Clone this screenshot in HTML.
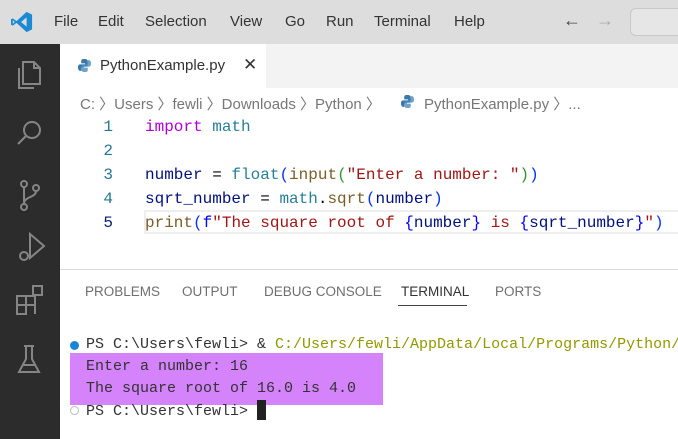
<!DOCTYPE html>
<html><head><style>
*{margin:0;padding:0;box-sizing:border-box}
body{width:678px;height:439px;overflow:hidden;background:#fff;position:relative;font-family:"Liberation Sans",sans-serif}
.a{position:absolute;white-space:pre}
.c{position:absolute;left:145px;font-family:"Liberation Mono",monospace;font-size:16px;line-height:24px;white-space:pre}
.n{position:absolute;left:60px;width:53px;text-align:right;font-family:"Liberation Mono",monospace;font-size:16px;line-height:24px;color:#237893}
.t{position:absolute;left:86px;font-family:"Liberation Mono",monospace;font-size:15px;line-height:22px;white-space:pre;color:#333}
</style></head><body>
<div class="a" style="left:0;top:0;width:678px;height:44px;background:#dddddd"></div>
<svg class="a" style="left:11px;top:11px" width="22" height="22" viewBox="0 0 24 24"><path d="M17 1 L23 4 V20 L17 23 L6 13 L2 16 L0 15 V9 L2 8 L6 11 Z M17 7 L11 12 L17 17 Z M2 10 V14 L4 12 Z" fill="#1a8ad4"/></svg>
<div class="a" style="left:54px;top:13px;font-size:15px;color:#333">File</div>
<div class="a" style="left:98px;top:13px;font-size:15px;color:#333">Edit</div>
<div class="a" style="left:145px;top:13px;font-size:15px;color:#333">Selection</div>
<div class="a" style="left:230px;top:13px;font-size:15px;color:#333">View</div>
<div class="a" style="left:285px;top:13px;font-size:15px;color:#333">Go</div>
<div class="a" style="left:326px;top:13px;font-size:15px;color:#333">Run</div>
<div class="a" style="left:374px;top:13px;font-size:15px;color:#333">Terminal</div>
<div class="a" style="left:454px;top:13px;font-size:15px;color:#333">Help</div>
<div class="a" style="left:563px;top:10px;font-size:18px;color:#444">←</div>
<div class="a" style="left:596px;top:10px;font-size:18px;color:#aaa">→</div>
<div class="a" style="left:630px;top:8px;width:60px;height:28px;border:1px solid #c8c8c8;border-radius:6px;background:#e6e6e6"></div>
<div class="a" style="left:0;top:44px;width:60px;height:395px;background:#2c2c2c"></div>
<svg class="a" style="left:14px;top:56px" width="32" height="340" viewBox="0 0 32 340" fill="none" stroke="#858585" stroke-width="2">
<path d="M9 6 H20 L26 12 V28 H9 Z M20 6 V12 H26 M5 12 V32 H20"/>
<circle cx="18" cy="74" r="8"/><path d="M12 80 L4 88"/>
<circle cx="10" cy="128" r="3"/><circle cx="22" cy="132" r="3"/><circle cx="10" cy="151" r="3"/><path d="M10 131 V148 M22 135 C22 142 10 140 10 148"/>
<path d="M16 178 L30 190 L16 202 Z"/><circle cx="10" cy="200" r="4"/>
<path d="M3 240 H12 V258 H3 Z M3 249 H21 V258 M12 240 H21 V249"/><rect x="19" y="230" width="9" height="9"/>
<path d="M12 290 V303 L5 316 H25 L18 303 V290 M10 290 H20 M8 309 H22"/>
</svg>
<div class="a" style="left:60px;top:44px;width:618px;height:44px;background:#f3f3f3"></div>
<div class="a" style="left:60px;top:44px;width:206px;height:44px;background:#fff"></div>
<svg class="a" style="left:78px;top:59px" width="13" height="13" viewBox="0 0 12 12"><path d="M6 0C3 0 3 1 3 2V4H6.5V5H2C0 5 0 7 0 8 0 10 1 11 2 11H3V9C3 8 4 7 5 7H8C9 7 9 6 9 5V2C9 1 8 0 6 0Z" fill="#3b77a8"/><path d="M6 12C9 12 9 11 9 10V8H5.5V7H10C12 7 12 5 12 4 12 2 11 1 10 1H9V3C9 4 8 5 7 5H4C3 5 3 6 3 7V10C3 11 4 12 6 12Z" fill="#4a8bbd" opacity=".8"/></svg>
<div class="a" style="left:100px;top:57px;font-size:15px;color:#333">PythonExample.py</div>
<div class="a" style="left:243px;top:55px;font-size:17px;color:#333">✕</div>
<div class="a" style="left:80px;top:93px;font-size:15px;color:#777">C: 〉Users 〉fewli 〉Downloads 〉Python 〉</div>
<svg class="a" style="left:401px;top:95px" width="13" height="13" viewBox="0 0 12 12"><path d="M6 0C3 0 3 1 3 2V4H6.5V5H2C0 5 0 7 0 8 0 10 1 11 2 11H3V9C3 8 4 7 5 7H8C9 7 9 6 9 5V2C9 1 8 0 6 0Z" fill="#3b77a8"/><path d="M6 12C9 12 9 11 9 10V8H5.5V7H10C12 7 12 5 12 4 12 2 11 1 10 1H9V3C9 4 8 5 7 5H4C3 5 3 6 3 7V10C3 11 4 12 6 12Z" fill="#4a8bbd" opacity=".8"/></svg>
<div class="a" style="left:424px;top:93px;font-size:15px;color:#777">PythonExample.py 〉...</div>
<div class="a" style="left:144px;top:210px;width:540px;height:24px;border:2px solid #eeeeee"></div>
<div class="n" style="top:115px">1</div>
<div class="n" style="top:139px">2</div>
<div class="n" style="top:163px">3</div>
<div class="n" style="top:187px">4</div>
<div class="n" style="top:211px;color:#0b216f">5</div>
<div class="c" style="top:115px"><span style="color:#af00db">import</span> <span style="color:#267f99">math</span></div>
<div class="c" style="top:163px"><span style="color:#001080">number</span> = <span style="color:#267f99">float</span><span style="color:#0431fa">(</span><span style="color:#795e26">input</span><span style="color:#319331">(</span><span style="color:#a31515">"Enter a number: "</span><span style="color:#319331">)</span><span style="color:#0431fa">)</span></div>
<div class="c" style="top:187px"><span style="color:#001080">sqrt_number</span> = <span style="color:#267f99">math</span>.<span style="color:#795e26">sqrt</span><span style="color:#0431fa">(</span><span style="color:#001080">number</span><span style="color:#0431fa">)</span></div>
<div class="c" style="top:211px"><span style="color:#795e26">print</span><span style="color:#0431fa">(</span><span style="color:#0000ff">f</span><span style="color:#a31515">"The square root of </span><span style="color:#0000ff">{</span><span style="color:#001080">number</span><span style="color:#0000ff">}</span><span style="color:#a31515"> is </span><span style="color:#0000ff">{</span><span style="color:#001080">sqrt_number</span><span style="color:#0000ff">}</span><span style="color:#a31515">"</span><span style="color:#0431fa">)</span></div>
<div class="a" style="left:60px;top:269px;width:618px;height:1px;background:#dcdcdc"></div>
<div class="a" style="left:85px;top:284px;font-size:13.5px;color:#6f6f6f">PROBLEMS</div>
<div class="a" style="left:182px;top:284px;font-size:13.5px;color:#6f6f6f">OUTPUT</div>
<div class="a" style="left:264px;top:284px;font-size:13.5px;color:#6f6f6f">DEBUG CONSOLE</div>
<div class="a" style="left:401px;top:284px;font-size:13.5px;color:#333">TERMINAL</div>
<div class="a" style="left:398px;top:305px;width:69px;height:1px;background:#424242"></div>
<div class="a" style="left:495px;top:284px;font-size:13.5px;color:#6f6f6f">PORTS</div>
<div class="a" style="left:70px;top:353px;width:313px;height:52px;background:#d583fa"></div>
<div class="a" style="left:70px;top:341px;width:9px;height:9px;border-radius:50%;background:#1a85d6"></div>
<div class="a" style="left:70px;top:406px;width:9px;height:9px;border-radius:50%;border:1px solid #bbb"></div>
<div class="t" style="top:334px">PS C:\Users\fewli&gt; &amp; <span style="color:#949800">C:/Users/fewli/AppData/Local/Programs/Python/</span></div>
<div class="t" style="top:356px">Enter a number: 16</div>
<div class="t" style="top:378px">The square root of 16.0 is 4.0</div>
<div class="t" style="top:400px">PS C:\Users\fewli&gt; <span style="display:inline-block;width:9px;height:20px;background:#222;vertical-align:-5px"></span></div>
</body></html>
